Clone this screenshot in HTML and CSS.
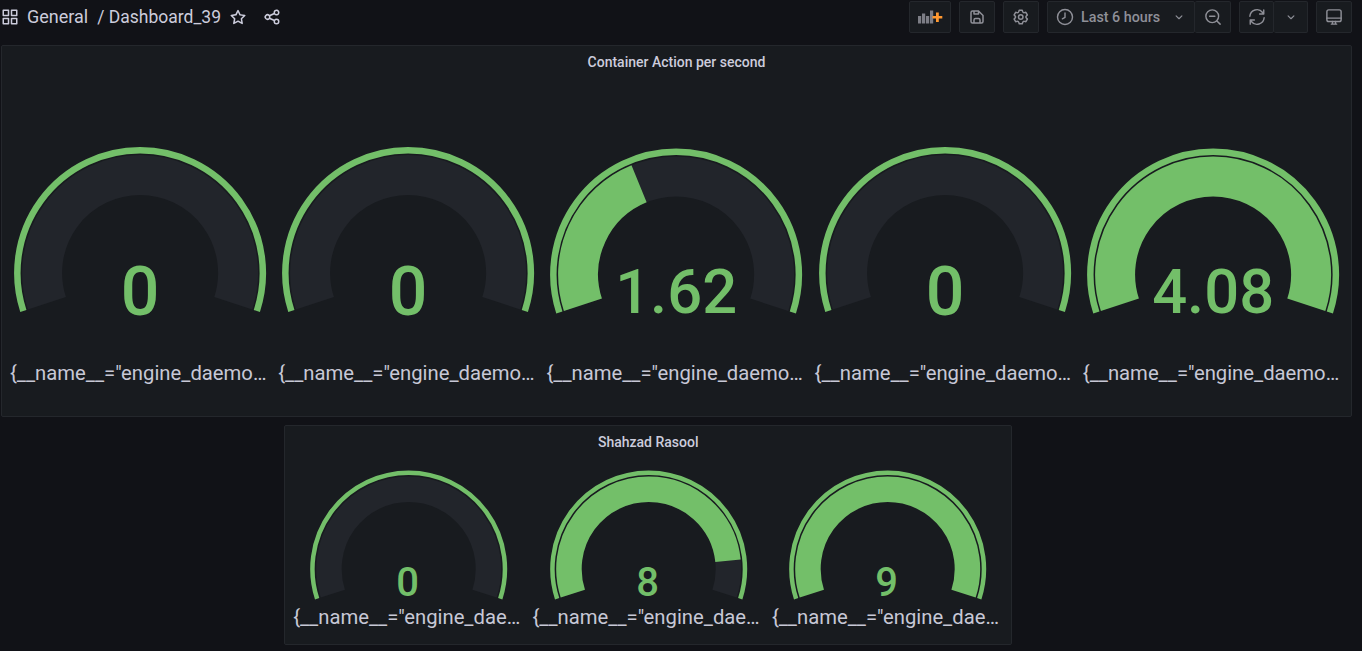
FILE: index.html
```html
<!DOCTYPE html>
<html lang="en">
<head>
<meta charset="utf-8">
<title>Dashboard_39</title>
<link rel="stylesheet" href="styles.css">
</head>
<body>
<header class="topbar">
  <div class="crumbs">
    <svg class="icon crumb-apps" viewBox="0 0 24 24"><path d="M10,13H3a1,1,0,0,0-1,1v7a1,1,0,0,0,1,1h7a1,1,0,0,0,1-1V14A1,1,0,0,0,10,13ZM9,20H4V15H9ZM21,2H14a1,1,0,0,0-1,1v7a1,1,0,0,0,1,1h7a1,1,0,0,0,1-1V3A1,1,0,0,0,21,2ZM20,9H15V4h5Zm1,4H14a1,1,0,0,0-1,1v7a1,1,0,0,0,1,1h7a1,1,0,0,0,1-1V14A1,1,0,0,0,21,13Zm-1,7H15V15h5ZM10,2H3A1,1,0,0,0,2,3v7a1,1,0,0,0,1,1h7a1,1,0,0,0,1-1V3A1,1,0,0,0,10,2ZM9,9H4V4H9Z"/></svg>
    <span class="crumb-text">General</span>
    <span class="crumb-text crumb-sep">/ Dashboard_39</span>
    <svg class="icon crumb-star" viewBox="0 0 24 24"><path d="M22,9.67A1,1,0,0,0,21.14,9l-5.69-.83L12.9,3a1,1,0,0,0-1.8,0L8.55,8.16,2.86,9a1,1,0,0,0-.81.68,1,1,0,0,0,.25,1l4.13,4-1,5.68A1,1,0,0,0,6.9,21.44L12,18.77l5.1,2.67a.93.93,0,0,0,.46.12,1,1,0,0,0,.59-.19,1,1,0,0,0,.4-1l-1-5.68,4.13-4A1,1,0,0,0,22,9.67Zm-6.15,4a1,1,0,0,0-.29.88l.72,4.2-3.76-2a1.06,1.06,0,0,0-.94,0l-3.76,2,.72-4.2a1,1,0,0,0-.29-.88l-3-3,4.21-.61a1,1,0,0,0,.76-.55L12,5.7l1.88,3.82a1,1,0,0,0,.76.55l4.21.61Z"/></svg>
    <svg class="icon crumb-share" viewBox="0 0 24 24"><path d="M18,14a4,4,0,0,0-3.08,1.48l-5.1-2.35a3.64,3.64,0,0,0,0-2.26l5.1-2.35A4,4,0,1,0,14,6a4.17,4.17,0,0,0,.07.71L8.79,9.14a4,4,0,1,0,0,5.72l5.28,2.43A4.17,4.17,0,0,0,14,18a4,4,0,1,0,4-4ZM18,4a2,2,0,1,1-2,2A2,2,0,0,1,18,4ZM6,14a2,2,0,1,1,2-2A2,2,0,0,1,6,14Zm12,6a2,2,0,1,1,2-2A2,2,0,0,1,18,20Z"/></svg>
  </div>
  <div class="tools">
    <div class="btn btn-add">
      <svg class="add-icon" viewBox="0 0 26 16">
        <rect class="bar" x="1" y="7" width="3.200" height="7.500"/>
        <rect class="bar" x="5" y="4.500" width="3.200" height="10"/>
        <rect class="bar" x="9" y="7" width="3.200" height="7.500"/>
        <rect class="bar" x="13" y="1.500" width="3.200" height="13"/>
        <path class="plus" d="M19 3.500v3.500h-3.500v2.600H19V13h2.800V9.600h3.500V7h-3.500V3.500z"/>
      </svg>
    </div>
    <div class="btn btn-icon">
      <svg class="icon" viewBox="0 0 24 24"><path d="M20.71,9.29l-6-6a1,1,0,0,0-.32-.21A1.09,1.09,0,0,0,14,3H6A3,3,0,0,0,3,6V18a3,3,0,0,0,3,3H18a3,3,0,0,0,3-3V10A1,1,0,0,0,20.71,9.29ZM9,5h4V7H9Zm6,14H9V16a1,1,0,0,1,1-1h4a1,1,0,0,1,1,1Zm4-1a1,1,0,0,1-1,1H17V16a3,3,0,0,0-3-3H10a3,3,0,0,0-3,3v3H6a1,1,0,0,1-1-1V6A1,1,0,0,1,6,5H7V8A1,1,0,0,0,8,9h6a1,1,0,0,0,1-1V6.410l4,4Z"/></svg>
    </div>
    <div class="btn btn-icon">
      <svg class="icon" viewBox="0 0 24 24"><path d="M19.9,12.66a1,1,0,0,1,0-1.32L21.18,9.9a1,1,0,0,0,.12-1.17l-2-3.46a1,1,0,0,0-1.07-.48l-1.88.38a1,1,0,0,1-1.15-.66l-.61-1.83A1,1,0,0,0,13.64,2h-4a1,1,0,0,0-1,.68L8.08,4.51a1,1,0,0,1-1.15.66L5,4.79A1,1,0,0,0,4,5.27L2,8.73A1,1,0,0,0,2.1,9.9l1.27,1.44a1,1,0,0,1,0,1.32L2.1,14.1A1,1,0,0,0,2,15.27l2,3.46a1,1,0,0,0,1.07.48l1.88-.38a1,1,0,0,1,1.15.66l.61,1.83a1,1,0,0,0,1,.68h4a1,1,0,0,0,.95-.68l.61-1.83a1,1,0,0,1,1.15-.66l1.88.38a1,1,0,0,0,1.07-.48l2-3.46a1,1,0,0,0-.12-1.17ZM18.41,14l.8.9-1.28,2.22-1.18-.24a3,3,0,0,0-3.45,2L12.92,20H10.36L10,18.86a3,3,0,0,0-3.45-2l-1.18.24L4.07,14.89l.8-.9a3,3,0,0,0,0-4l-.8-.9L5.35,6.89l1.18.24a3,3,0,0,0,3.45-2L10.36,4h2.56l.38,1.14a3,3,0,0,0,3.45,2l1.18-.24,1.28,2.22-.8.9A3,3,0,0,0,18.41,14ZM11.64,8a4,4,0,1,0,4,4A4,4,0,0,0,11.64,8Zm0,6a2,2,0,1,1,2-2A2,2,0,0,1,11.64,14Z"/></svg>
    </div>
    <div class="btn-group">
      <div class="btn btn-time">
        <svg class="icon line" viewBox="0 0 24 24"><circle cx="12" cy="12" r="10"/><path d="M12 6.500v6l-3.500 2"/></svg>
        <span class="time-label">Last 6 hours</span>
        <svg class="icon line chevron" viewBox="0 0 24 24"><path d="M7 10l5 5 5-5"/></svg>
      </div>
      <div class="btn btn-icon btn-joined">
        <svg class="icon line" viewBox="0 0 24 24"><circle cx="11" cy="11" r="8.500"/><path d="M7.500 11h7M17.200 17.200l4.300 4.300"/></svg>
      </div>
    </div>
    <div class="btn-group">
      <div class="btn btn-refresh">
        <svg class="icon line" viewBox="0 0 24 24"><path d="M2.500 11a9.500 9.500 0 0 1 17-5l1.500 2M21 2.500V8h-5.500M21.500 13a9.500 9.500 0 0 1-17 5L3 16M3 21.500V16h5.500"/></svg>
      </div>
      <div class="btn btn-interval btn-joined">
        <svg class="icon line chevron" viewBox="0 0 24 24"><path d="M7 10l5 5 5-5"/></svg>
      </div>
    </div>
    <div class="btn btn-icon">
      <svg class="icon line" viewBox="0 0 24 24"><rect x="2.500" y="2.500" width="19" height="15.500" rx="2.500"/><path d="M2.500 13.500h19M8.500 21.500h7M10 18v3.500M14 18v3.500"/></svg>
    </div>
  </div>
</header>

<main class="dashboard">
  <section class="panel panel-top">
    <h2 class="panel-title">Container Action per second</h2>
    <div class="gauges gauges-five">
      <figure class="gauge gauge-big">
        <svg class="dial" viewBox="-134 -195 268 245">
          <path class="ring" d="M-116.74 37.93A122.750 122.750 0 1 1 116.74 37.930"/>
          <path class="track" d="M-93.200 30.280A98 98 0 1 1 93.200 30.280"/>
          <text class="value" y="41.500">0</text>
        </svg>
        <figcaption class="label">{__name__="engine_daemon_container_actions_seconds_count"}</figcaption>
      </figure>
      <figure class="gauge gauge-big">
        <svg class="dial" viewBox="-134 -195 268 245">
          <path class="ring" d="M-116.74 37.93A122.750 122.750 0 1 1 116.74 37.930"/>
          <path class="track" d="M-93.200 30.280A98 98 0 1 1 93.200 30.280"/>
          <text class="value" y="41.500">0</text>
        </svg>
        <figcaption class="label">{__name__="engine_daemon_container_actions_seconds_count"}</figcaption>
      </figure>
      <figure class="gauge gauge-big">
        <svg class="dial" viewBox="-134 -196.500 268 245">
          <path class="ring" d="M-116.74 37.93A122.750 122.750 0 1 1 116.74 37.930"/>
          <path class="track" d="M-93.200 30.280A98 98 0 1 1 93.200 30.280"/>
          <path class="fill" pathLength="100" stroke-dasharray="39.7 100" d="M-93.200 30.280A98 98 0 1 1 93.200 30.280"/>
          <text class="value value-long" y="38.500">1.62</text>
        </svg>
        <figcaption class="label">{__name__="engine_daemon_container_actions_seconds_count"}</figcaption>
      </figure>
      <figure class="gauge gauge-big">
        <svg class="dial" viewBox="-134 -195 268 245">
          <path class="ring" d="M-116.74 37.93A122.750 122.750 0 1 1 116.74 37.930"/>
          <path class="track" d="M-93.200 30.280A98 98 0 1 1 93.200 30.280"/>
          <text class="value" y="41.500">0</text>
        </svg>
        <figcaption class="label">{__name__="engine_daemon_container_actions_seconds_count"}</figcaption>
      </figure>
      <figure class="gauge gauge-big">
        <svg class="dial" viewBox="-134 -196.500 268 245">
          <path class="ring" d="M-116.74 37.93A122.750 122.750 0 1 1 116.74 37.930"/>
          <path class="fill" d="M-93.200 30.280A98 98 0 1 1 93.200 30.280"/>
          <text class="value value-long" y="38.500">4.08</text>
        </svg>
        <figcaption class="label">{__name__="engine_daemon_container_actions_seconds_count"}</figcaption>
      </figure>
    </div>
  </section>

  <section class="panel panel-bottom">
    <h2 class="panel-title">Shahzad Rasool</h2>
    <div class="gauges gauges-three">
      <figure class="gauge gauge-small">
        <svg class="dial" viewBox="-119.500 -111 239 147">
          <path class="ring" d="M-91.540 29.740A96.250 96.250 0 1 1 91.540 29.740"/>
          <path class="track" d="M-75.850 24.640A79.750 79.750 0 1 1 75.850 24.640"/>
          <text class="value" x="-1" y="27">0</text>
        </svg>
        <figcaption class="label">{__name__="engine_daemon_container_actions_seconds_count"}</figcaption>
      </figure>
      <figure class="gauge gauge-small">
        <svg class="dial" viewBox="-119.500 -111 239 147">
          <path class="ring" d="M-91.540 29.740A96.250 96.250 0 1 1 91.540 29.740"/>
          <path class="track" d="M-75.850 24.640A79.750 79.750 0 1 1 75.850 24.640"/>
          <path class="fill" pathLength="100" stroke-dasharray="88.9 100" d="M-75.850 24.640A79.750 79.750 0 1 1 75.850 24.640"/>
          <text class="value" x="-1" y="27">8</text>
        </svg>
        <figcaption class="label">{__name__="engine_daemon_container_actions_seconds_count"}</figcaption>
      </figure>
      <figure class="gauge gauge-small">
        <svg class="dial" viewBox="-119.500 -111 239 147">
          <path class="ring" d="M-91.540 29.740A96.250 96.250 0 1 1 91.540 29.740"/>
          <path class="fill" d="M-75.850 24.640A79.750 79.750 0 1 1 75.850 24.640"/>
          <text class="value" x="-1" y="27">9</text>
        </svg>
        <figcaption class="label">{__name__="engine_daemon_container_actions_seconds_count"}</figcaption>
      </figure>
    </div>
  </section>
</main>
</body>
</html>
```

FILE: styles.css
```css
* { box-sizing: border-box; }

html, body {
  height: 100%;
}

body {
  margin: 0;
  background: #111217;
  color: #ccccdc;
  font-family: Roboto, "Liberation Sans", sans-serif;
  overflow: hidden;
}

.topbar {
  display: flex;
  align-items: flex-start;
  justify-content: space-between;
  height: 45px;
  padding: 1px 10px 0 1px;
}

.crumbs {
  display: flex;
  align-items: center;
  height: 32px;
}

.icon {
  display: block;
  width: 18px;
  height: 18px;
  fill: #ccccdc;
  flex: none;
}

.icon.line {
  fill: none;
  stroke: #8f9098;
  stroke-width: 1.9;
  stroke-linecap: round;
  stroke-linejoin: round;
}

.crumb-apps { margin-right: 8px; }

.crumb-text {
  font-size: 18px;
  line-height: 24px;
  color: #ccccdc;
  white-space: pre;
}

.crumb-sep {
  margin-left: 9px;
  font-size: 17.5px;
}

.crumb-star { margin-left: 8px; }

.crumb-share { margin-left: 16px; }

.tools {
  display: flex;
  gap: 8px;
}

.btn-group {
  display: flex;
}

.btn {
  display: flex;
  align-items: center;
  justify-content: center;
  height: 32px;
  background: #181b1f;
  border: 1px solid #24272c;
  border-radius: 2px;
}

.btn .icon { fill: #8f9098; }
.btn .icon.line { fill: none; }

.btn-add { width: 42px; }

.add-icon {
  display: block;
  width: 26px;
  height: 16px;
}

.bar { fill: #7c7d85; }
.plus { fill: #ff9830; }

.btn-icon { width: 36px; }
.btn-refresh { width: 35px; }
.btn-interval { width: 34px; }
.btn-joined { border-left: 0; }

.btn-time {
  width: 148px;
  justify-content: flex-start;
  padding: 0 0 0 8px;
}

.time-label {
  margin-left: 7px;
  font-size: 14.3px;
  font-weight: 500;
  line-height: 16px;
  color: #8f9098;
  white-space: nowrap;
}

.chevron { width: 14px; height: 14px; }

.btn-time .chevron { margin-left: 12px; }

.dashboard {
  display: grid;
  grid-template-columns: repeat(24, minmax(0, 1fr));
  grid-template-rows: 372px 220px;
  gap: 8px;
  padding: 0 10px 0 1px;
}

.panel {
  background: #181b1f;
  border: 1px solid #24272c;
  border-radius: 2px;
  min-width: 0;
}

.panel-top { grid-column: 1 / -1; }
.panel-bottom { grid-column: 6 / span 13; }

.panel-title {
  margin: 0;
  height: 32px;
  font-size: 14px;
  font-weight: 500;
  line-height: 32px;
  text-align: center;
  color: #ccccdc;
}

.gauges {
  display: grid;
  padding: 0 4px;
}

.gauges-five { grid-template-columns: repeat(5, minmax(0, 1fr)); }
.gauges-three { grid-template-columns: repeat(3, minmax(0, 1fr)); }

.gauge {
  margin: 0;
  min-width: 0;
}

.dial {
  display: block;
  width: 100%;
}

.gauge-big .dial { height: 245px; }
.gauge-small .dial { height: 147px; }

.ring, .track, .fill {
  fill: none;
  stroke-linecap: butt;
}

.ring { stroke: #73bf69; }
.track { stroke: #22252b; }
.fill { stroke: #73bf69; }

.gauge-big .ring { stroke-width: 6.5; }
.gauge-big .track, .gauge-big .fill { stroke-width: 40; }
.gauge-small .ring { stroke-width: 4.5; }
.gauge-small .track, .gauge-small .fill { stroke-width: 25.5; }

.value {
  fill: #73bf69;
  font-weight: 500;
  text-anchor: middle;
}

.gauge-big .value { font-size: 68px; }
.gauge-big .value-long { font-size: 61.5px; }
.gauge-small .value { font-size: 40px; }

.label {
  padding: 0 2px 0 4px;
  font-size: 20.25px;
  line-height: 24px;
  color: #c7c8d6;
  text-align: center;
  white-space: nowrap;
  overflow: hidden;
  text-overflow: ellipsis;
}

.gauge-big .label { margin-top: 38px; }
```
